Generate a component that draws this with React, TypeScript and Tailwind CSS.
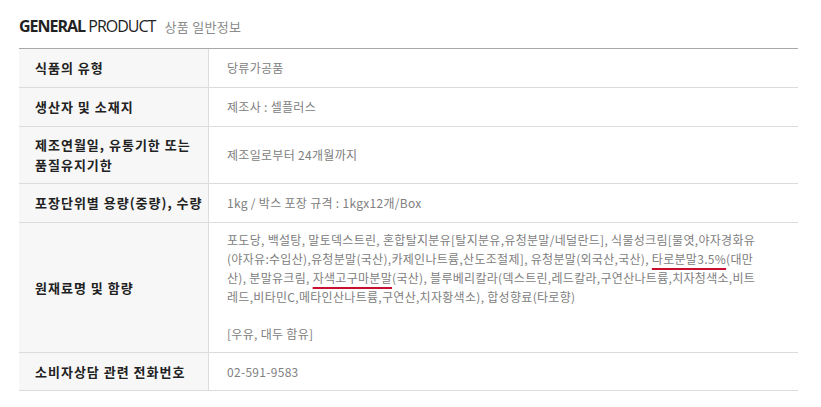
const font = "font-['Noto_Sans_CJK_KR','Noto_Sans',sans-serif]";

type Row = {
	label: React.ReactNode;
	value: React.ReactNode;
	height: string;
};

function Mark({ children }: { children: React.ReactNode }) {
	return (
		<span className="underline decoration-[#c8102e] decoration-2 underline-offset-[4px]">
			{children}
		</span>
	);
}

const rows: Row[] = [
	{ label: "식품의 유형", value: "당류가공품", height: "h-[39px]" },
	{ label: "생산자 및 소재지", value: "제조사 : 셀플러스", height: "h-[39px]" },
	{
		label: (
			<>
				제조연월일, 유통기한 또는
				<br />
				품질유지기한
			</>
		),
		value: "제조일로부터 24개월까지",
		height: "h-[57px]",
	},
	{
		label: "포장단위별 용량(중량), 수량",
		value: "1kg / 박스 포장 규격 : 1kgx12개/Box",
		height: "h-[39px]",
	},
	{
		label: "원재료명 및 함량",
		value: (
			<div className="whitespace-nowrap leading-[18.7px]">
				<div>포도당, 백설탕, 말토덱스트린, 혼합탈지분유[탈지분유,유청분말/네덜란드], 식물성크림[물엿,야자경화유</div>
				<div>
					(야자유:수입산),유청분말(국산),카제인나트륨,산도조절제], 유청분말(외국산,국산),{" "}
					<Mark>타로분말3.5%</Mark>(대만
				</div>
				<div>
					산), 분말유크림, <Mark>자색고구마분말</Mark>(국산), 블루베리칼라(덱스트린,레드칼라,구연산나트륨,치자청색소,비트
				</div>
				<div>레드,비타민C,메타인산나트륨,구연산,치자황색소), 합성향료(타로향)</div>
				<div className="h-[18.7px]" />
				<div>[우유, 대두 함유]</div>
			</div>
		),
		height: "h-[130px]",
	},
	{ label: "소비자상담 관련 전화번호", value: "02-591-9583", height: "h-[38px]" },
];

export default function App() {
	return (
		<div className={`min-h-screen bg-white pl-[19px] pr-[23px] pt-[14px] ${font}`}>
			<div className="flex items-baseline gap-[9px] h-[26px]">
				<h2 className="text-[16px] tracking-[-1px] text-[#222] font-['Open_Sans',sans-serif]">
					<span className="font-bold">GENERAL</span> PRODUCT
				</h2>
				<span className="text-[13px] tracking-[0.3px] text-[#8a8a8a]">상품 일반정보</span>
			</div>

			<div className="mt-[8px] border-t border-[#a8a8a8]">
				{rows.map((row, i) => (
					<div
						key={i}
						className={`grid grid-cols-[190px_1fr] border-b border-[#dcdcdc] ${row.height}`}
					>
						<div className="flex items-center bg-[#f7f7f7] border-r border-[#dcdcdc] pl-4 text-[13px] font-bold leading-[20px] tracking-[1px] text-[#222]">
							<div>{row.label}</div>
						</div>
						<div className="flex items-center pl-[18px] text-[12px] tracking-[0.3px] text-[#808080] overflow-hidden">
							{row.value}
						</div>
					</div>
				))}
			</div>
		</div>
	);
}
